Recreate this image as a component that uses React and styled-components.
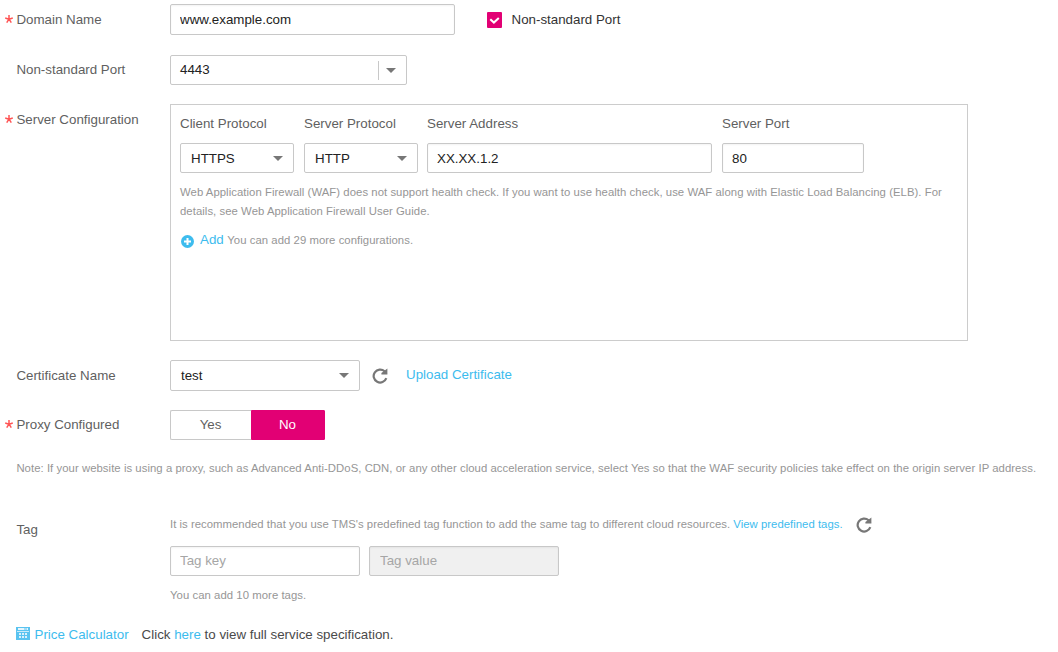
import React from "react";
import styled, { createGlobalStyle, css } from "styled-components";

const GlobalStyle = createGlobalStyle`
  * { box-sizing: border-box; }
  body {
    margin: 0;
    background: #fff;
    color: #5f5f5f;
    font: 13.33px/20px "Liberation Sans", Arial, sans-serif;
  }
  input { font: inherit; }
`;

const Page = styled.form`
  display: flex;
  flex-direction: column;
  width: 1058px;
  height: 652px;
  padding: 4px 0 0 5px;
  overflow: hidden;
`;

const Row = styled.div`
  display: flex;
  align-items: flex-start;
  margin-bottom: ${(p) => p.$gap}px;
`;

const Label = styled.label`
  display: flex;
  align-items: center;
  flex: none;
  width: 165px;
  height: 20px;
  padding-left: ${(p) => (p.$required ? 0 : 11.4)}px;
  margin-top: ${(p) => p.$top ?? 5}px;
  white-space: nowrap;
`;

const StarIcon = styled.svg`
  flex: none;
  width: 8px;
  height: 8px;
  margin: 0 3.4px 2px 0;
`;

const field = css`
  height: ${(p) => p.$h ?? 30}px;
  width: ${(p) => p.$w}px;
  border: 1px solid #c8c8c8;
  border-radius: 2px;
  background: #fff;
  color: #222;
`;

const TextField = styled.input`
  ${field}
  flex: none;
  display: block;
  padding: 0 9px ${(p) => (p.placeholder ? 1 : 0)}px;
  outline: none;
  box-shadow: inset 0 1px 2px rgba(0, 0, 0, 0.05);
  &::placeholder { color: #a6a6a6; opacity: 1; }
  &:disabled { padding-left: 10px; background: #f0f0f0; }
`;

const SelectBox = styled.div`
  ${field}
  flex: none;
  display: flex;
  align-items: center;
  justify-content: space-between;
  padding: 0 10px 0 ${(p) => (p.$split ? 9 : 10)}px;
`;

const SelectText = styled.span`
  padding-top: ${(p) => (p.$low ? 1 : 0)}px;
`;

const Caret = styled.span`
  display: flex;
  align-items: center;
  height: 19px;
  padding-left: 7px;
  border-left: 1px solid ${(p) => (p.$split ? "#c8c8c8" : "transparent")};
`;

const CheckLabel = styled.label`
  display: flex;
  align-items: center;
  height: 20px;
  gap: 9.5px;
  margin: 6px 0 0 32px;
  color: #333;
`;

const CheckMark = styled.svg`
  width: 15px;
  height: 16px;
`;

const Panel = styled.section`
  width: 798px;
  height: 237px;
  padding: 9px 9px 0;
  border: 1px solid #ccc;
`;

const Columns = styled.div`
  display: grid;
  grid-template-columns: 114px 113px 285px 142px;
  column-gap: 10px;
  row-gap: 9px;
`;

const Hint = styled.p`
  margin: ${(p) => p.$m ?? "0"};
  color: #969696;
  font-size: 11.33px;
  line-height: 19px;
  letter-spacing: ${(p) => p.$track ?? 0.05}px;
  white-space: nowrap;
`;

const Link = styled.a`
  color: #3dbcee;
  text-decoration: none;
  white-space: nowrap;
`;

const AddLine = styled.div`
  display: flex;
  align-items: center;
  height: 20px;
  margin-top: 9px;
`;

const AddIcon = styled.svg`
  width: 13px;
  height: 13px;
  margin: 3px 6px 0 1px;
`;

const Refresh = styled.svg`
  flex: none;
  width: 16px;
  height: 16px;
  margin: ${(p) => p.$m};
`;

const UploadLink = styled(Link)`
  margin: 5px 0 0 18px;
`;

const Toggle = styled.button`
  width: ${(p) => p.$w}px;
  height: 30px;
  padding: 0 1px 1px 0;
  font: inherit;
  border: 1px solid ${(p) => (p.$active ? "#e20074" : "#c8c8c8")};
  border-right-width: ${(p) => (p.$active ? 1 : 0)}px;
  border-radius: ${(p) => (p.$active ? "0 1px 1px 0" : "2px 0 0 2px")};
  background: ${(p) => (p.$active ? "#e20074" : "#fff")};
  color: ${(p) => (p.$active ? "#fff" : "#5f5f5f")};
`;

const TagArea = styled.div`
  display: flex;
  flex-direction: column;
`;

const TagHead = styled.div`
  display: flex;
  height: 19px;
`;

const TagFields = styled.div`
  display: flex;
  gap: 9px;
  margin-top: 12px;
`;

const Footer = styled.footer`
  display: flex;
  align-items: center;
  height: 20px;
  padding-left: 11px;
`;

const CalcSvg = styled.svg`
  width: 14px;
  height: 13px;
  margin: -3px 4.5px 0 0;
`;

const FooterText = styled.span`
  margin-left: 13px;
  color: #4a4a4a;
`;

const Star = () => (
  <StarIcon viewBox="0 0 8 8" fill="none" stroke="#f55" strokeWidth="1.5">
    <path d="M4 4.2V0M4 4.2.2 3M4 4.2 7.8 3M4 4.2 1.7 7.6M4 4.2l2.3 3.4" />
  </StarIcon>
);

const Arrow = () => (
  <svg width="10" height="5" viewBox="0 0 10 5">
    <path d="M0 0h10L5 5z" fill="#777" />
  </svg>
);

const Select = ({ children, split, low, w, h }) => (
  <SelectBox $w={w} $h={h} $split={split}>
    <SelectText $low={low}>{children}</SelectText>
    <Caret $split={split}><Arrow /></Caret>
  </SelectBox>
);

const RefreshIcon = ({ m }) => (
  <Refresh $m={m} viewBox="0 0 16 16">
    <path d="M12.6 3.3A6.5 6.5 0 1 0 14.3 10.2" fill="none" stroke="#777" strokeWidth="2.2" />
    <path d="M15.4 .4V6.5H9.4V5z" fill="#777" />
  </Refresh>
);

const CalculatorIcon = () => (
  <CalcSvg viewBox="0 0 14 13">
    <path d="M0 0h14v13H0z" fill="#59c3f0" />
    <path d="M2 1h10v2H2z" fill="#e6f6fd" />
    <path d="M8 1.5h3v1H8z" fill="#59c3f0" />
    <path d="M1 4h12v1H1z" fill="#c9ebfa" />
    <path d="M3 6h2v2H3zm3 0h2v2H6zm3 0h2v2H9zM3 9h2v2H3zm3 0h2v2H6zm3 0h2v2H9z" fill="#d9f1fc" />
  </CalcSvg>
);

export default function App() {
  return (
    <>
      <GlobalStyle />
      <Page>
        <Row $gap={20}>
          <Label $required $top={6}><Star />Domain Name</Label>
          <TextField $w={285} $h={31} defaultValue="www.example.com" />
          <CheckLabel>
            <CheckMark viewBox="0 0 15 16">
              <rect width="15" height="16" rx="1" fill="#e20074" />
              <path d="M3.3 7.2 6.9 10.6 11.8 6" fill="none" stroke="#fff" strokeWidth="2" />
            </CheckMark>
            Non-standard Port
          </CheckLabel>
        </Row>
        <Row $gap={19}>
          <Label>Non-standard Port</Label>
          <Select w={237} split>4443</Select>
        </Row>
        <Row $gap={19}>
          <Label $required $top={6}><Star />Server Configuration</Label>
          <Panel>
            <Columns>
              <span>Client Protocol</span>
              <span>Server Protocol</span>
              <span>Server Address</span>
              <span>Server Port</span>
              <Select w={114} low>HTTPS</Select>
              <Select w={114} low>HTTP</Select>
              <TextField $w={285} defaultValue="XX.XX.1.2" />
              <TextField $w={142} defaultValue="80" />
            </Columns>
            <Hint $m="10px 0 0">
              Web Application Firewall (WAF) does not support health check. If you want to use health check, use WAF along with Elastic Load Balancing (ELB). For
              <br />
              details, see Web Application Firewall User Guide.
            </Hint>
            <AddLine>
              <AddIcon viewBox="0 0 13 13">
                <circle cx="6.5" cy="6.5" r="6.5" fill="#3dbcee" />
                <path d="M6.5 3v7M3 6.5h7" stroke="#fff" strokeWidth="2" />
              </AddIcon>
              <Link>Add</Link>
              <Hint $m="1px 0 0 3.5px">You can add 29 more configurations.</Hint>
            </AddLine>
          </Panel>
        </Row>
        <Row $gap={19}>
          <Label $top={6}>Certificate Name</Label>
          <Select w={190} h={31}>test</Select>
          <RefreshIcon m="8px 0 0 12px" />
          <UploadLink>Upload Certificate</UploadLink>
        </Row>
        <Row $gap={19}>
          <Label $required><Star />Proxy Configured</Label>
          <Toggle type="button" $w={81}>Yes</Toggle>
          <Toggle type="button" $w={74} $active>No</Toggle>
        </Row>
        <Hint $m="0 0 37px 11.4px">
          Note: If your website is using a proxy, such as Advanced Anti-DDoS, CDN, or any other cloud acceleration service, select Yes so that the WAF security policies take effect on the origin server IP address.
        </Hint>
        <Row $gap={20}>
          <Label>Tag</Label>
          <TagArea>
            <TagHead>
              <Hint $track={0.027}>
                It is recommended that you use TMS's predefined tag function to add the same tag to different cloud resources. <Link>View predefined tags.</Link>
              </Hint>
              <RefreshIcon m="2px 0 0 13px" />
            </TagHead>
            <TagFields>
              <TextField $w={190} placeholder="Tag key" />
              <TextField $w={190} placeholder="Tag value" disabled />
            </TagFields>
            <Hint $m="10px 0 0">You can add 10 more tags.</Hint>
          </TagArea>
        </Row>
        <Footer>
          <CalculatorIcon />
          <Link>Price Calculator</Link>
          <FooterText>Click <Link>here</Link> to view full service specification.</FooterText>
        </Footer>
      </Page>
    </>
  );
}
